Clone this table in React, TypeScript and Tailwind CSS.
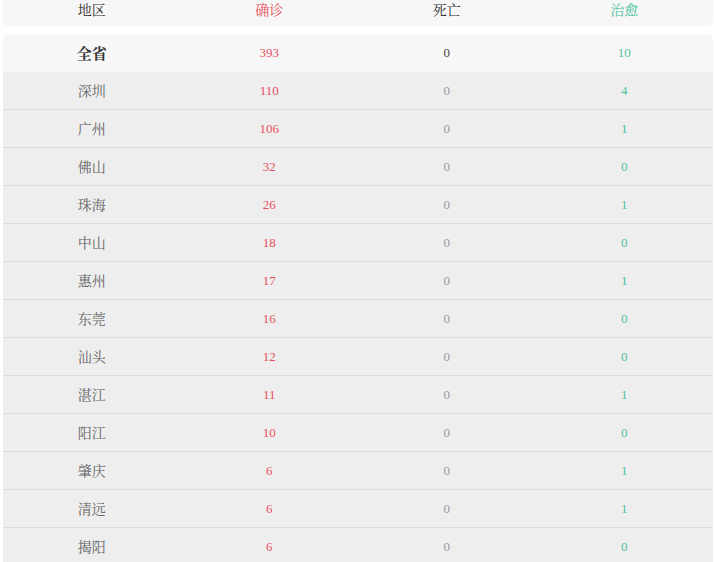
const rows = [
  { name: "深圳", confirmed: 110, dead: 0, cured: 4 },
  { name: "广州", confirmed: 106, dead: 0, cured: 1 },
  { name: "佛山", confirmed: 32, dead: 0, cured: 0 },
  { name: "珠海", confirmed: 26, dead: 0, cured: 1 },
  { name: "中山", confirmed: 18, dead: 0, cured: 0 },
  { name: "惠州", confirmed: 17, dead: 0, cured: 1 },
  { name: "东莞", confirmed: 16, dead: 0, cured: 0 },
  { name: "汕头", confirmed: 12, dead: 0, cured: 0 },
  { name: "湛江", confirmed: 11, dead: 0, cured: 1 },
  { name: "阳江", confirmed: 10, dead: 0, cured: 0 },
  { name: "肇庆", confirmed: 6, dead: 0, cured: 1 },
  { name: "清远", confirmed: 6, dead: 0, cured: 1 },
  { name: "揭阳", confirmed: 6, dead: 0, cured: 0 },
];

const cjk = "font-['Noto_Serif_CJK_SC','Noto_Sans_CJK_SC',serif]";
const num = "font-['Liberation_Serif',serif]";

export default function App() {
  return (
    <div className="h-[562px] overflow-hidden bg-white pl-[3px] pr-[1px]">
      <div className={`grid h-[26px] grid-cols-4 rounded-b-[5px] bg-[#f7f7f7] text-center text-[14px] leading-[18px] ${cjk}`}>
        <div className="text-[#333]">地区</div>
        <div className="text-[#e8505b]">确诊</div>
        <div className="text-[#333]">死亡</div>
        <div className="text-[#4cc39a]">治愈</div>
      </div>

      <div className="mt-[8px] overflow-hidden rounded-t-[5px]">
        <div className="grid h-[38px] grid-cols-4 items-center bg-[#f7f7f7] text-center">
          <div className={`text-[15px] font-bold text-[#333] ${cjk}`}>全省</div>
          <div className={`text-[13px] text-[#e8505b] ${num}`}>393</div>
          <div className={`text-[13px] text-[#444] ${num}`}>0</div>
          <div className={`text-[13px] text-[#4cc39a] ${num}`}>10</div>
        </div>
        {rows.map((r) => (
          <div
            key={r.name}
            className="grid h-[38px] grid-cols-4 items-center border-b border-[#dcdcdc] bg-[#eeeeee] text-center"
          >
            <div className={`text-[14px] text-[#666] ${cjk}`}>{r.name}</div>
            <div className={`text-[13px] text-[#e8505b] ${num}`}>{r.confirmed}</div>
            <div className={`text-[13px] text-[#999] ${num}`}>{r.dead}</div>
            <div className={`text-[13px] text-[#4cc39a] ${num}`}>{r.cured}</div>
          </div>
        ))}
      </div>
    </div>
  );
}
